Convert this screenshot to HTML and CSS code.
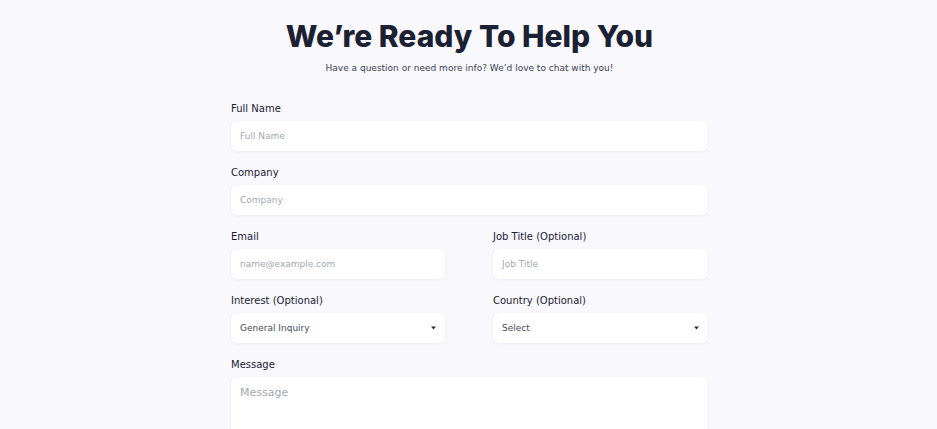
FILE: index.html
```html
<!DOCTYPE html>
<html lang="en">
<head>
<meta charset="utf-8">
<title>Contact</title>
<link rel="stylesheet" href="styles.css">
</head>
<body>
<main class="page">
  <h1 class="title">We’re Ready To Help You</h1>
  <p class="subtitle">Have a question or need more info? We’d love to chat with you!</p>
  <form class="form">
    <div class="field">
      <label class="label">Full Name</label>
      <div class="input placeholder">Full Name</div>
    </div>
    <div class="field">
      <label class="label">Company</label>
      <div class="input placeholder">Company</div>
    </div>
    <div class="row">
      <div class="field">
        <label class="label">Email</label>
        <div class="input placeholder">name@example.com</div>
      </div>
      <div class="field">
        <label class="label">Job Title (Optional)</label>
        <div class="input placeholder">Job Title</div>
      </div>
    </div>
    <div class="row">
      <div class="field">
        <label class="label">Interest (Optional)</label>
        <div class="input select"><span>General Inquiry</span>
          <svg class="caret" width="5" height="4" viewBox="0 0 5 4"><path d="M0 0.5 L5 0.5 L2.5 3.5 Z" fill="#2a2e3a"/></svg>
        </div>
      </div>
      <div class="field">
        <label class="label">Country (Optional)</label>
        <div class="input select"><span>Select</span>
          <svg class="caret" width="5" height="4" viewBox="0 0 5 4"><path d="M0 0.5 L5 0.5 L2.5 3.5 Z" fill="#2a2e3a"/></svg>
        </div>
      </div>
    </div>
    <div class="field">
      <label class="label">Message</label>
      <div class="input textarea placeholder">Message</div>
    </div>
  </form>
</main>
</body>
</html>
```
FILE: styles.css
```css
* { box-sizing: border-box; }
html, body { margin: 0; padding: 0; }
body {
  background: #f8f8fd;
  font-family: "DejaVu Sans", "Open Sans", sans-serif;
  color: #1b2033;
  overflow: hidden;
}
.page {
  padding-top: 16px;
  padding-left: 2px;
  display: flex;
  flex-direction: column;
  align-items: center;
}
.title {
  margin: 0;
  font-family: "Inter", "DejaVu Sans", sans-serif;
  font-size: 30px;
  line-height: 40px;
  font-weight: 800;
  color: #1b2033;
  letter-spacing: 0;
}
.subtitle {
  margin: 5px 0 0;
  font-size: 9px;
  line-height: 14px;
  color: #3a3f52;
}
.form {
  width: 477px;
  margin-top: 26px;
  display: flex;
  flex-direction: column;
}
.row {
  display: grid;
  grid-template-columns: 214px 215px;
  column-gap: 48px;
}
.field {
  display: flex;
  flex-direction: column;
  margin-bottom: 14px;
}
.label {
  font-size: 10px;
  line-height: 14px;
  padding-top: 1px;
  color: #1b2033;
  margin-bottom: 5px;
}
.input {
  height: 30px;
  background: #ffffff;
  border-radius: 6px;
  box-shadow: 0 1px 3px rgba(30, 35, 60, 0.06), 0 0 1px rgba(30, 35, 60, 0.06);
  padding: 0 9px;
  display: flex;
  align-items: center;
  font-size: 9px;
}
.placeholder { color: #a4a7b0; }
.select {
  justify-content: space-between;
  color: #474b58;
  padding-right: 9px;
}
.caret { margin-right: 0; }
.textarea {
  height: 80px;
  align-items: flex-start;
  padding-top: 9px;
  font-size: 11px;
}
```
